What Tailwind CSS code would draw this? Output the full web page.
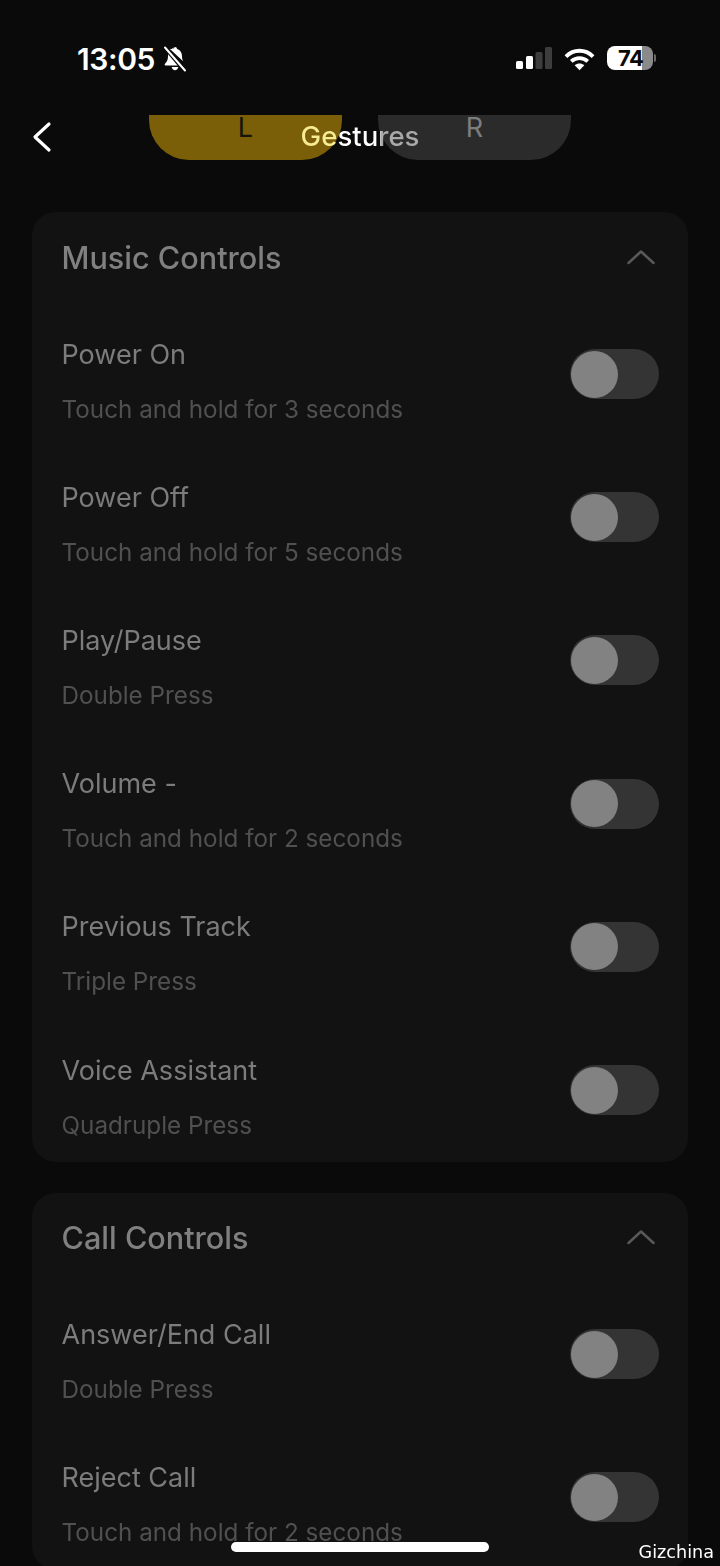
<!DOCTYPE html>
<html lang="en">
<head>
    <meta charset="UTF-8">
    <meta name="viewport" content="width=device-width, initial-scale=1.0">
    <title>Gestures</title>
    <script src="https://cdn.jsdelivr.net/npm/@tailwindcss/browser@4"></script>
</head>
<body class="bg-[#0a0a0a] font-['Inter',sans-serif] antialiased">
<div class="relative w-[720px] h-[1566px] overflow-hidden">
    <!-- Status bar -->
    <div class="h-[115px] flex items-start justify-between pt-[40px] pl-[77px] pr-[64px] text-white">
        <div class="flex items-center gap-[8px]">
            <span class="text-[30px] leading-[38px] font-semibold tracking-[-0.4px]">13:05</span>
            <svg width="24" height="26" viewBox="0 0 24 26" fill="none">
                <path d="M12 1c-1.200 0-2 .8-2.100 1.900C6.600 3.900 5 6.700 5 10.200c0 3.500-1.200 5.800-3 7.500-.7.7-.3 1.800.7 1.800h14.800L5.500 4.500" fill="#fff"/>
                <path d="M12 1c1.200 0 2 .8 2.100 1.900 3.300 1 4.900 3.800 4.900 7.300 0 2.200.5 3.900 1.300 5.300L7.500 3.500C8.500 3 9.200 3 9.900 2.900" fill="#fff"/>
                <path d="M8.700 21h6.600c-.3 2-1.600 3.200-3.300 3.200S9 23 8.700 21z" fill="#fff"/>
                <path d="M1.500 .5l21 25" stroke="#0a0a0a" stroke-width="4.500"/>
                <path d="M2 1.500l20 23" stroke="#fff" stroke-width="2" stroke-linecap="round"/>
            </svg>
        </div>
        <div class="flex items-start gap-[12px] h-[38px] pt-[6px]">
            <svg width="36" height="23" viewBox="0 0 36 23" class="mt-[1px]">
                <rect x="0" y="14" width="7" height="8" rx="1.500" fill="#fff"/>
                <rect x="10" y="9" width="7" height="13" rx="1.500" fill="#fff"/>
                <rect x="19.500" y="5" width="7" height="17" rx="1.500" fill="#3d3d3d"/>
                <rect x="29" y="0" width="7" height="22" rx="1.500" fill="#3d3d3d"/>
            </svg>
            <svg width="31" height="24" viewBox="0 0 32 24" fill="none" stroke="#fff" stroke-width="4" class="mt-[1px]">
                <path d="M2 9.500C10 1.500 22 1.500 30 9.500"/>
                <path d="M7.500 14.500c5-4.500 12-4.500 17 0"/>
                <path d="M16 23.500l-5-5c3-2.500 7-2.500 10 0z" fill="#fff" stroke="none"/>
            </svg>
            <div class="flex items-center">
                <div class="w-[46px] h-[24px] rounded-[8px] bg-[linear-gradient(90deg,#ffffff_35px,#8a8a8a_35px)] pl-[11px] text-[#0a0a0a] text-[22px] leading-[24px] font-bold tracking-[-0.5px] whitespace-nowrap">74</div>
                <div class="w-[2px] h-[8px] ml-[1px] rounded-r-full bg-[#6a6a6a]"></div>
            </div>
        </div>
    </div>

    <!-- Nav with L/R tabs behind the title -->
    <div class="relative h-[97px]">
        <div class="absolute left-[149px] top-0 w-[193px] h-[45px] rounded-b-[40px] bg-[#7a5f08] flex justify-center">
            <span class="text-[#16140c] text-[27px] leading-[25px]">L</span>
        </div>
        <div class="absolute left-[378px] top-0 w-[193px] h-[45px] rounded-b-[40px] bg-[#2b2b2b] flex justify-center">
            <span class="text-[#7d7d7d] text-[27px] leading-[25px]">R</span>
        </div>
        <div class="relative flex justify-center pt-[4px]">
            <span class="text-[27.6px] leading-[34px] font-medium bg-[linear-gradient(90deg,#f7ec93_37px,#ffffff_37px,#ffffff_80px,#a9a9a9_80px)] bg-clip-text text-transparent">Gestures</span>
        </div>
        <svg class="absolute left-[32px] top-[6px]" width="20" height="32" viewBox="0 0 20 32" fill="none" stroke="#fff" stroke-width="3.200" stroke-linecap="round" stroke-linejoin="round">
            <path d="M17 3L3 16l14 13"/>
        </svg>
    </div>

    <main class="px-[32px] flex flex-col gap-[31px] [will-change:transform]">
        <!-- Music Controls -->
        <section class="bg-[#121212] rounded-[24px]">
            <div class="h-[91px] pl-[29.500px] pr-[33px] flex items-center justify-between">
                <h2 class="text-[#808080] text-[30.600px] leading-[40px] font-medium">Music Controls</h2>
                <svg width="28" height="16" viewBox="0 0 28 16" fill="none" stroke="#595959" stroke-width="2.500" stroke-linecap="round" stroke-linejoin="round"><path d="M1.500 13L14 1.500 26.500 13"/></svg>
            </div>
            <div class="h-[143.200px] pl-[29.500px] pr-[29px] flex items-center justify-between">
                <div class="pt-[15px]">
                    <p class="text-[#7c7c7c] text-[27px] leading-[40px]">Power On</p>
                    <p class="text-[#505050] text-[24.250px] leading-[40px] mt-[15px]">Touch and hold for 3 seconds</p>
                </div>
                <div class="w-[89px] h-[50px] mb-[1px] rounded-full bg-[#343434] pl-[1px] flex items-center"><div class="w-[47px] h-[47px] rounded-full bg-[#828282]"></div></div>
            </div>
            <div class="h-[143.200px] pl-[29.500px] pr-[29px] flex items-center justify-between">
                <div class="pt-[15px]">
                    <p class="text-[#7c7c7c] text-[27px] leading-[40px]">Power Off</p>
                    <p class="text-[#505050] text-[24.250px] leading-[40px] mt-[15px]">Touch and hold for 5 seconds</p>
                </div>
                <div class="w-[89px] h-[50px] mb-[1px] rounded-full bg-[#343434] pl-[1px] flex items-center"><div class="w-[47px] h-[47px] rounded-full bg-[#828282]"></div></div>
            </div>
            <div class="h-[143.200px] pl-[29.500px] pr-[29px] flex items-center justify-between">
                <div class="pt-[15px]">
                    <p class="text-[#7c7c7c] text-[27px] leading-[40px]">Play/Pause</p>
                    <p class="text-[#505050] text-[24.250px] leading-[40px] mt-[15px]">Double Press</p>
                </div>
                <div class="w-[89px] h-[50px] mb-[1px] rounded-full bg-[#343434] pl-[1px] flex items-center"><div class="w-[47px] h-[47px] rounded-full bg-[#828282]"></div></div>
            </div>
            <div class="h-[143.200px] pl-[29.500px] pr-[29px] flex items-center justify-between">
                <div class="pt-[15px]">
                    <p class="text-[#7c7c7c] text-[27px] leading-[40px]">Volume -</p>
                    <p class="text-[#505050] text-[24.250px] leading-[40px] mt-[15px]">Touch and hold for 2 seconds</p>
                </div>
                <div class="w-[89px] h-[50px] mb-[1px] rounded-full bg-[#343434] pl-[1px] flex items-center"><div class="w-[47px] h-[47px] rounded-full bg-[#828282]"></div></div>
            </div>
            <div class="h-[143.200px] pl-[29.500px] pr-[29px] flex items-center justify-between">
                <div class="pt-[15px]">
                    <p class="text-[#7c7c7c] text-[27px] leading-[40px]">Previous Track</p>
                    <p class="text-[#505050] text-[24.250px] leading-[40px] mt-[15px]">Triple Press</p>
                </div>
                <div class="w-[89px] h-[50px] mb-[1px] rounded-full bg-[#343434] pl-[1px] flex items-center"><div class="w-[47px] h-[47px] rounded-full bg-[#828282]"></div></div>
            </div>
            <div class="h-[143.200px] pl-[29.500px] pr-[29px] flex items-center justify-between">
                <div class="pt-[15px]">
                    <p class="text-[#7c7c7c] text-[27px] leading-[40px]">Voice Assistant</p>
                    <p class="text-[#505050] text-[24.250px] leading-[40px] mt-[15px]">Quadruple Press</p>
                </div>
                <div class="w-[89px] h-[50px] mb-[1px] rounded-full bg-[#343434] pl-[1px] flex items-center"><div class="w-[47px] h-[47px] rounded-full bg-[#828282]"></div></div>
            </div>
        </section>

        <!-- Call Controls -->
        <section class="bg-[#121212] rounded-[24px]">
            <div class="h-[90px] pl-[29.500px] pr-[33px] flex items-center justify-between">
                <h2 class="text-[#808080] text-[30.600px] leading-[40px] font-medium">Call Controls</h2>
                <svg width="28" height="16" viewBox="0 0 28 16" fill="none" stroke="#595959" stroke-width="2.500" stroke-linecap="round" stroke-linejoin="round"><path d="M1.500 13L14 1.500 26.500 13"/></svg>
            </div>
            <div class="h-[143.200px] pl-[29.500px] pr-[29px] flex items-center justify-between">
                <div class="pt-[15px]">
                    <p class="text-[#7c7c7c] text-[27px] leading-[40px]">Answer/End Call</p>
                    <p class="text-[#505050] text-[24.250px] leading-[40px] mt-[15px]">Double Press</p>
                </div>
                <div class="w-[89px] h-[50px] mb-[1px] rounded-full bg-[#343434] pl-[1px] flex items-center"><div class="w-[47px] h-[47px] rounded-full bg-[#828282]"></div></div>
            </div>
            <div class="h-[143.200px] pl-[29.500px] pr-[29px] flex items-center justify-between">
                <div class="pt-[15px]">
                    <p class="text-[#7c7c7c] text-[27px] leading-[40px]">Reject Call</p>
                    <p class="text-[#505050] text-[24.250px] leading-[40px] mt-[15px]">Touch and hold for 2 seconds</p>
                </div>
                <div class="w-[89px] h-[50px] mb-[1px] rounded-full bg-[#343434] pl-[1px] flex items-center"><div class="w-[47px] h-[47px] rounded-full bg-[#828282]"></div></div>
            </div>
        </section>
    </main>

    <!-- Home indicator and watermark -->
    <div class="absolute left-[231px] top-[1542px] w-[258px] h-[10px] rounded-full bg-white"></div>
    <span class="absolute right-[6px] top-[1540px] text-white text-[17.600px] leading-[24px] font-['DejaVu_Sans',sans-serif]">Gizchina</span>
</div>
</body>
</html>
